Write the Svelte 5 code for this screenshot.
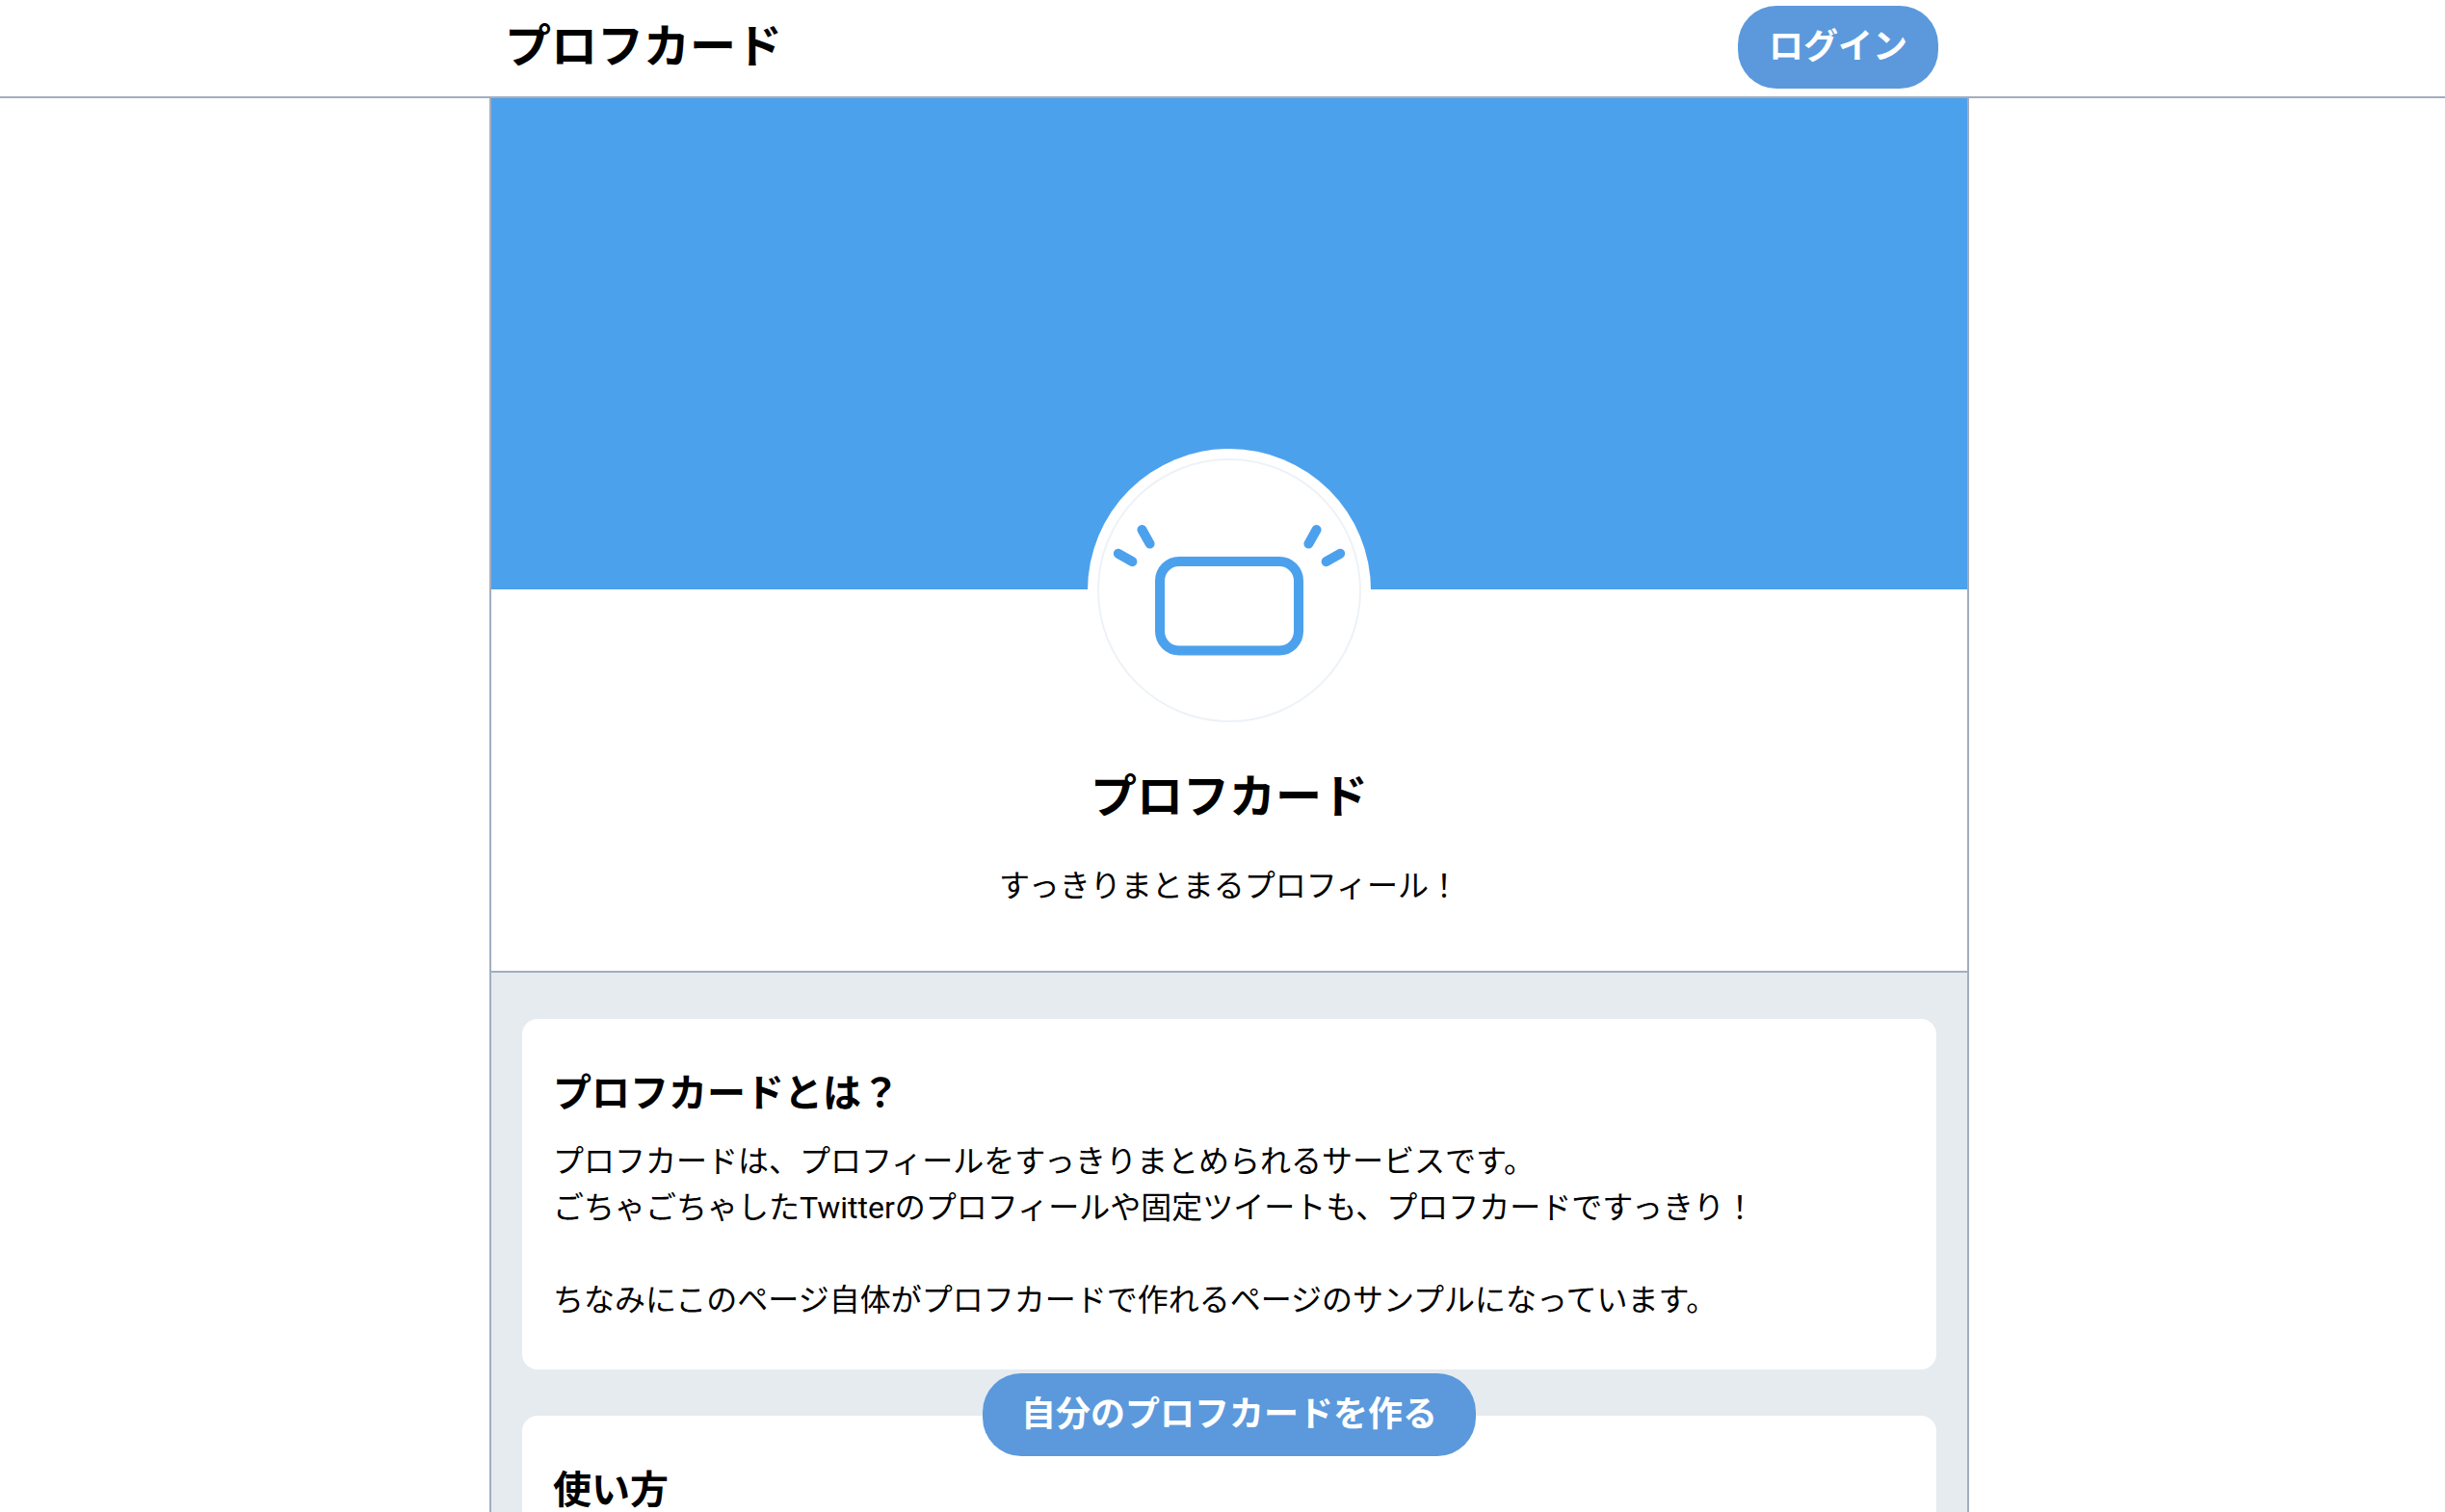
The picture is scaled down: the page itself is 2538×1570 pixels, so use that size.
<script>
  const title = 'プロフカード';

  const sections = [
    {
      heading: 'プロフカードとは？',
      lines: [
        'プロフカードは、プロフィールをすっきりまとめられるサービスです。',
        'ごちゃごちゃしたTwitterのプロフィールや固定ツイートも、プロフカードですっきり！',
        '',
        'ちなみにこのページ自体がプロフカードで作れるページのサンプルになっています。'
      ]
    },
    { heading: '使い方', lines: [] }
  ];
</script>

<div class="page">
  <header class="header">
    <div class="header-inner">
      <h1 class="site-title">{title}</h1>
      <button class="button login" type="button">ログイン</button>
    </div>
  </header>

  <main class="profile">
    <div class="banner"></div>

    <section class="intro">
      <div class="avatar">
        <svg viewBox="0 0 270 270" fill="none" stroke="currentColor" stroke-width="10" stroke-linecap="round" aria-hidden="true">
          <rect x="63" y="105" width="144" height="92.6" rx="20"></rect>
          <line x1="44.4" y1="72" x2="52.6" y2="86.6"></line>
          <line x1="19.8" y1="96.8" x2="34.4" y2="105.2"></line>
          <line x1="225.6" y1="72" x2="217.4" y2="86.6"></line>
          <line x1="250.2" y1="96.8" x2="235.6" y2="105.2"></line>
        </svg>
      </div>
      <h2 class="name">{title}</h2>
      <p class="tagline">すっきりまとまるプロフィール！</p>
    </section>

    <div class="cards">
      {#each sections as section}
        <article class="card">
          <h3 class="card-title">{section.heading}</h3>
          {#if section.lines.length}
            <p class="card-text">{section.lines.join('\n')}</p>
          {/if}
        </article>
      {/each}
    </div>
  </main>

  <div class="cta">
    <button class="button create" type="button">自分のプロフカードを作る</button>
  </div>
</div>

<style>
  :global(body) {
    margin: 0;
    background-color: #ffffff;
  }

  .page {
    font-family: Roboto, 'Noto Sans CJK JP', sans-serif;
    font-size: 32px;
    line-height: 48px;
    color: #000000;
  }

  .page * {
    box-sizing: border-box;
  }

  h1,
  h2,
  h3,
  p {
    margin: 0;
  }

  .header {
    padding-left: 14px;
    border-bottom: 2px solid #a2adc0;
  }

  .header-inner {
    max-width: 1536px;
    height: 100px;
    margin: 0 auto;
    padding: 0 32px 2px 16px;
    display: flex;
    align-items: center;
    justify-content: space-between;
  }

  .site-title,
  .name {
    font-size: 48px;
    line-height: 72px;
    font-weight: 700;
  }

  .button {
    border: none;
    border-radius: 40px;
    background-color: #5b99dc;
    color: #ffffff;
    font-family: inherit;
    font-size: 36px;
    line-height: 54px;
    font-weight: 700;
    cursor: pointer;
  }

  .login {
    padding: 16px 32px;
  }

  .create {
    padding: 16px 40px;
    pointer-events: auto;
  }

  .profile {
    max-width: 1550px;
    margin: 0 auto;
    padding-left: 14px;
  }

  .banner,
  .intro,
  .cards {
    border: 0 solid #a2adc0;
    border-width: 0 2px;
  }

  .banner {
    height: 510px;
    background-color: #4ca1ed;
  }

  .intro {
    display: flex;
    flex-direction: column;
    align-items: center;
    padding-bottom: 64px;
    border-bottom-width: 2px;
  }

  .avatar {
    width: 294px;
    height: 294px;
    margin-top: -146px;
    padding: 10px;
    border-radius: 50%;
    background-color: #ffffff;
    color: #4ca1ed;
  }

  .avatar svg {
    display: block;
    width: 100%;
    height: 100%;
    border: 2px solid #edf2f7;
    border-radius: 50%;
  }

  .name {
    margin-top: 32px;
  }

  .tagline {
    margin-top: 32px;
  }

  .cards {
    display: flex;
    flex-direction: column;
    gap: 48px;
    padding: 48px 32px 144px;
    background-color: #e6ebef;
  }

  .card {
    padding: 48px 32px;
    border-radius: 16px;
    background-color: #ffffff;
  }

  .card-title {
    font-size: 40px;
    line-height: 60px;
    font-weight: 700;
  }

  .card-text {
    margin-top: 16px;
    white-space: pre-line;
  }

  .cta {
    position: fixed;
    left: 0;
    right: 0;
    bottom: 58px;
    display: flex;
    justify-content: center;
    padding-left: 14px;
    pointer-events: none;
  }
</style>
